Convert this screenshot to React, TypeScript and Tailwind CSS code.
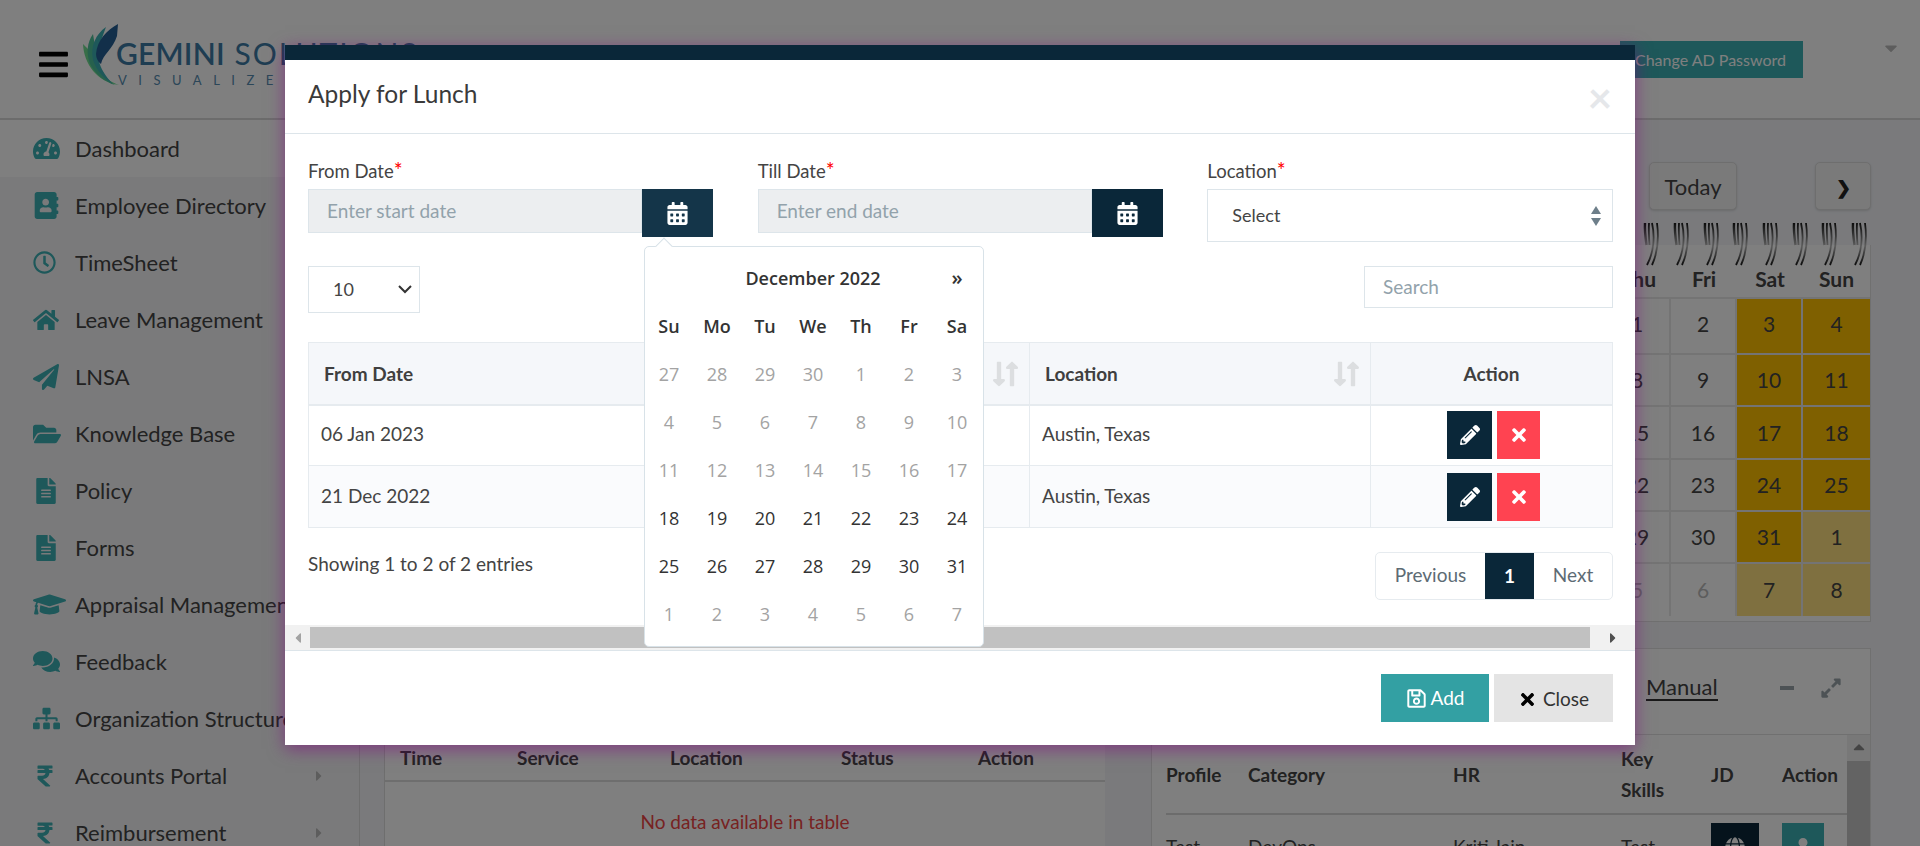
import React from 'react'
import {
    FaAddressBook,
    FaBars,
    FaCalendarAlt,
    FaCaretDown,
    FaCaretLeft,
    FaCaretRight,
    FaComments,
    FaExpandAlt,
    FaFileAlt,
    FaFolderOpen,
    FaGlobe,
    FaGraduationCap,
    FaHome,
    FaLongArrowAltDown,
    FaLongArrowAltUp,
    FaPaperPlane,
    FaPencilAlt,
    FaRegClock,
    FaRegSave,
    FaRupeeSign,
    FaSitemap,
    FaTachometerAlt,
    FaTimes,
    FaUser,
} from 'react-icons/fa'

const sideItems = [
    { label: 'Dashboard', icon: <FaTachometerAlt size={27} /> },
    { label: 'Employee Directory', icon: <FaAddressBook size={27} /> },
    { label: 'TimeSheet', icon: <FaRegClock size={23} /> },
    { label: 'Leave Management', icon: <FaHome size={26} /> },
    { label: 'LNSA', icon: <FaPaperPlane size={26} /> },
    { label: 'Knowledge Base', icon: <FaFolderOpen size={28} /> },
    { label: 'Policy', icon: <FaFileAlt size={26} /> },
    { label: 'Forms', icon: <FaFileAlt size={26} /> },
    { label: 'Appraisal Management', icon: <FaGraduationCap size={33} /> },
    { label: 'Feedback', icon: <FaComments size={27} /> },
    { label: 'Organization Structure', icon: <FaSitemap size={27} /> },
    { label: 'Accounts Portal', icon: <FaRupeeSign size={24} />, more: true },
    { label: 'Reimbursement', icon: <FaRupeeSign size={24} />, more: true },
]

const calRows = [
    { h: 'h-[56px]', pb: 'pb-[5px]', days: ['1', '2', '3', '4'] },
    { h: 'h-[52px]', pb: '', days: ['8', '9', '10', '11'] },
    { h: 'h-[53px]', pb: '', days: ['15', '16', '17', '18'] },
    { h: 'h-[52px]', pb: '', days: ['22', '23', '24', '25'] },
    { h: 'h-[52px]', pb: '', days: ['29', '30', '31', '1'] },
    { h: 'h-[54px]', pb: '', days: ['5', '6', '7', '8'] },
]

const pickerWeeks = [
    ['27', '28', '29', '30', '1', '2', '3'],
    ['4', '5', '6', '7', '8', '9', '10'],
    ['11', '12', '13', '14', '15', '16', '17'],
    ['18', '19', '20', '21', '22', '23', '24'],
    ['25', '26', '27', '28', '29', '30', '31'],
    ['1', '2', '3', '4', '5', '6', '7'],
]

const Spiral = () => (
    <svg width="16" height="44" viewBox="0 0 16 44" fill="none" stroke="url(#ring)" strokeWidth="1.8">
        <defs>
            <linearGradient id="ring" gradientUnits="userSpaceOnUse" x1="0" y1="0" x2="0" y2="44">
                <stop offset="0" stopColor="#111" />
                <stop offset="0.55" stopColor="#bbb" />
                <stop offset="1" stopColor="#111" />
            </linearGradient>
        </defs>
        <path d="M2 1 C1.5 8 2.5 16 3.5 23" strokeWidth="2.4" />
        <path d="M6 1 C5.5 8 6 16 6.5 23" />
        <path d="M9 1 C12 14 11 30 4 43" />
        <path d="M14 1 C16 16 15 30 9 43" />
    </svg>
)

const SortIcon = () => (
    <span className="flex text-[#dcdee0]">
        <FaLongArrowAltDown size={28} className="-mr-[15px]" />
        <FaLongArrowAltUp size={28} />
    </span>
)

const DateField = (props: { label: string; placeholder: string; active?: boolean }) => {
    return (
        <div className="flex flex-col">
            <label className="mb-[8px] h-[22px] text-[18.5px] leading-[22px] text-[#444]">
                {props.label}
                <span className="text-[21px] leading-none text-[#ff0000]">*</span>
            </label>
            <div className="flex items-start">
                <div className="flex h-[44px] w-[334px] items-center border border-[#dde5ea] bg-[#eceef0] pl-[18px] text-[19px] text-[#92a2ab]">
                    {props.placeholder}
                </div>
                <button className={`flex h-[48px] w-[71px] items-center justify-center text-white ${props.active ? 'bg-[#143549]' : 'bg-[#0a2739]'}`}>
                    <FaCalendarAlt size={23} />
                </button>
            </div>
        </div>
    )
}

const ActionCell = () => (
    <td className="border-l border-[#e6ebef] p-0">
        <div className="flex justify-center gap-[5px] pl-[4px]">
            <button className="flex h-[48px] w-[45px] items-center justify-center bg-[#0a2739] text-white">
                <FaPencilAlt size={20} />
            </button>
            <button className="flex h-[48px] w-[43px] items-center justify-center bg-[#ff4351] text-white">
                <FaTimes size={20} />
            </button>
        </div>
    </td>
)

const DatePicker = () => (
    <div className="absolute left-[359px] top-[186px] z-10 h-[401px] w-[340px] rounded-[5px] border border-[#d8e2e8] bg-white font-['Open_Sans',sans-serif] text-[18px] text-[#333]">
        <div className="absolute -top-[7px] left-[13px] h-[12px] w-[12px] rotate-45 border-l border-t border-[#d8e2e8] bg-white"></div>
        <div className="relative grid grid-cols-7 pr-[2px] pt-[7px]">
            <div className="col-span-5 col-start-2 flex h-[48px] items-center justify-center whitespace-nowrap text-[18px] font-semibold">December 2022</div>
            <div className="flex h-[48px] items-center justify-center text-[20px] font-semibold">»</div>
            {['Su', 'Mo', 'Tu', 'We', 'Th', 'Fr', 'Sa'].map((d) => (
                <div key={d} className="flex h-[48px] items-center justify-center font-semibold">{d}</div>
            ))}
            {pickerWeeks.map((week, w) =>
                week.map((d, i) => (
                    <div key={`${w}-${i}`} className={`flex h-[48px] items-center justify-center ${w === 3 || w === 4 ? 'text-[#333]' : 'text-[#a3a3a3]'}`}>
                        {d}
                    </div>
                )),
            )}
        </div>
    </div>
)

const Modal = () => (
    <div className="relative flex h-[700px] w-[1350px] flex-col border-t-[15px] border-[#0a2739] bg-white text-[#444] shadow-[0_4px_16px_rgba(128,0,128,0.55)]">
        <div className="flex h-[74px] items-center justify-between border-b border-[#dde5ea] pl-[23px] pr-[23px]">
            <h4 className="pb-[5px] text-[24.5px] text-[#3a3a3a]">Apply for Lunch</h4>
            <span className="text-[42px] font-bold leading-none text-[#e5e7ea]">×</span>
        </div>

        <div className="flex-1 pl-[23px] pr-[22px] pt-[25px]">
            <div className="grid grid-cols-3 gap-x-[44px]">
                <DateField label="From Date" placeholder="Enter start date" active />
                <DateField label="Till Date" placeholder="Enter end date" />
                <div className="flex flex-col">
                    <label className="mb-[8px] h-[22px] text-[18.5px] leading-[22px] text-[#444]">
                        Location<span className="text-[21px] leading-none text-[#ff0000]">*</span>
                    </label>
                    <div className="flex h-[53px] items-center justify-between border border-[#dde5ea] pl-[24px] pr-[11px] text-[18px]">
                        Select
                        <svg width="10" height="20" viewBox="0 0 10 20" fill="#6e7f8a">
                            <path d="M5 0 L10 8 H0 Z M5 20 L0 12 H10 Z" />
                        </svg>
                    </div>
                </div>
            </div>

            <div className="mt-[24px] flex items-start justify-between">
                <div className="flex h-[47px] w-[112px] items-center justify-between border border-[#dde5ea] pl-[24px] pr-[7px] text-[18px]">
                    10
                    <svg width="14" height="9" viewBox="0 0 14 9" fill="none" stroke="#333" strokeWidth="2">
                        <path d="M1 1 L7 7 L13 1" />
                    </svg>
                </div>
                <div className="flex h-[42px] w-[249px] items-center border border-[#dde5ea] pl-[18px] text-[19px] text-[#92a2ab]">Search</div>
            </div>

            <table className="mt-[29px] w-full table-fixed border-collapse border border-[#e6ebef] text-[19px]">
                <thead>
                    <tr className="h-[62px] border-b-2 border-[#e6ebef] bg-[#f5f7fa] text-left font-bold">
                        <th className="w-[360px] pl-[15px] pt-[2px] font-bold text-[#3f3f3f]">From Date</th>
                        <th className="w-[361px] pl-[15px] pr-[3px] pt-[2px] font-bold text-[#3f3f3f]">
                            <div className="flex items-center justify-between">Till Date<SortIcon /></div>
                        </th>
                        <th className="w-[341px] border-l border-[#e6ebef] pl-[15px] pr-[3px] pt-[2px] font-bold text-[#3f3f3f]">
                            <div className="flex items-center justify-between">Location<SortIcon /></div>
                        </th>
                        <th className="border-l border-[#e6ebef] pt-[2px] text-center font-bold text-[#3f3f3f]">Action</th>
                    </tr>
                </thead>
                <tbody>
                    <tr className="h-[61px] border-b border-[#e6ebef]">
                        <td className="pb-[2px] pl-[12px]">06 Jan 2023</td>
                        <td className="pb-[2px] pl-[12px]">06 Jan 2023</td>
                        <td className="border-l border-[#e6ebef] pb-[2px] pl-[12px]">Austin, Texas</td>
                        <ActionCell />
                    </tr>
                    <tr className="h-[62px] bg-[#fafbfd]">
                        <td className="pl-[12px]">21 Dec 2022</td>
                        <td className="pl-[12px]">21 Dec 2022</td>
                        <td className="border-l border-[#e6ebef] pl-[12px]">Austin, Texas</td>
                        <ActionCell />
                    </tr>
                </tbody>
            </table>

            <div className="mt-[24px] flex items-start justify-between">
                <div className="text-[19px] leading-[24px]">Showing 1 to 2 of 2 entries</div>
                <div className="flex h-[48px] items-stretch rounded-[5px] border border-[#e6ebef] text-[19px] text-[#5d6b74]">
                    <span className="flex w-[109px] items-center justify-center pb-[1px]">Previous</span>
                    <span className="flex w-[49px] items-center justify-center bg-[#0a2739] font-bold text-white">1</span>
                    <span className="flex w-[78px] items-center justify-center pb-[1px]">Next</span>
                </div>
            </div>
        </div>

        <div className="flex h-[26px] items-center justify-between border-b border-[#dde5ea] bg-[#f1f1f1]">
            <span className="flex w-[25px] justify-center text-[#a3a3a3]"><FaCaretLeft size={16} /></span>
            <div className="h-[21px] flex-1 bg-[#c1c1c1]"></div>
            <span className="flex w-[45px] justify-center text-[#505050]"><FaCaretRight size={16} /></span>
        </div>

        <div className="flex h-[94px] items-start justify-end gap-[5px] pr-[22px] pt-[23px] text-[19px]">
            <button className="flex h-[48px] w-[108px] items-center justify-center gap-[4px] bg-[#33a0a3] text-white">
                <FaRegSave size={21} />
                Add
            </button>
            <button className="flex h-[48px] w-[119px] items-center justify-center gap-[6px] bg-[#e4e4e4] pt-[2px] text-[#333]">
                <FaTimes size={19} className="text-black" />
                Close
            </button>
        </div>

        <DatePicker />
    </div>
)

const Logo = () => (
    <div className="ml-[13px] flex items-center">
        <svg width="36" height="62" viewBox="0 0 36 62" className="-mt-[8px]">
            <path d="M0 20 C1 40 14 58 36 61 C22 56 9 44 6 26 Z" fill="#70dd90" />
            <path d="M10 10 C4 18 3 30 7 40 C12 50 22 58 32 61 C20 53 9 38 12 22 Z" fill="#4fc39a" />
            <path d="M23 3 C13 10 7 22 10 36 C13 46 22 56 30 60 C20 50 12 36 16 22 Z" fill="#3cb0b4" />
            <path d="M35 0 C24 6 14 16 13 30 C13 34 15 38 18 40 C20 30 30 25 34 12 Z" fill="#245f94" />
        </svg>
        <div className="-ml-[3px] mt-[8px] flex flex-col">
            <span className="whitespace-nowrap text-[30px] leading-[30px] text-[#3c7aa4]">
                <span className="font-semibold tracking-[0.2px]">GEMINI</span>
                <span className="tracking-[2px]"> SOLUTIONS</span>
            </span>
            <span className="ml-[2px] mt-[4px] whitespace-nowrap text-[13px] leading-[16px] tracking-[11.5px] text-[#568cb0]">VISUALIZE</span>
        </div>
    </div>
)

const EventCalendar = () => (
    <div className="relative ml-auto mt-[35px] w-[464px] border-b border-r border-[#e0e0e0] bg-white">
        <div className="absolute -top-[23px] right-[3px] flex gap-[13.7px]">
            {Array.from({ length: 15 }).map((_, i) => (
                <Spiral key={i} />
            ))}
        </div>
        <div className="grid h-[52px] grid-cols-[66px_66px_66px_66px_66px_66px_67px] text-[#444]">
            {['Mon', 'Tue', 'Wed', 'Thu', 'Fri', 'Sat', 'Sun'].map((d) => (
                <div key={d} className="flex items-center justify-center pt-[15px] text-[21px] font-bold leading-none">{d}</div>
            ))}
        </div>
        {calRows.map((row, r) => (
            <div key={r} className={`grid grid-cols-[66px_66px_66px_66px_66px_66px_67px] border-t-2 border-[#e8e8e8] text-[21px] ${row.h}`}>
                <div className="col-span-3"></div>
                <div className={`flex items-center justify-center border-r-2 border-[#e8e8e8] ${row.pb} ${r === 5 ? 'text-[#bbb]' : ''}`}>{row.days[0]}</div>
                <div className={`flex items-center justify-center border-r-2 border-[#e8e8e8] ${row.pb} ${r === 5 ? 'text-[#bbb]' : ''}`}>{row.days[1]}</div>
                <div className={`flex items-center justify-center border-r-2 border-[#e8e8e8] ${row.pb} ${r === 5 ? 'bg-[#ffe080]' : 'bg-[#ffc000]'}`}>{row.days[2]}</div>
                <div className={`flex items-center justify-center ${row.pb} ${r >= 4 ? 'bg-[#ffe080]' : 'bg-[#ffc000]'}`}>{row.days[3]}</div>
            </div>
        ))}
        <div className="h-[5px]"></div>
    </div>
)

const ManualPanel = () => (
    <div className="mt-[26px] border border-[#e0e0e0] bg-white">
        <div className="flex h-[86px] items-center border-b border-[#e0e0e0] pb-[8px] pl-[494px] text-[22px]">
            <span className="border-b-2 border-[#333] leading-[24px]">Manual</span>
            <span className="ml-[62px] h-[4px] w-[14px] bg-[#9aa5ab]"></span>
            <FaExpandAlt size={22} className="ml-[26px] text-[#9aa5ab]" />
        </div>
        <div className="flex">
            <div className="flex-1 pl-[14px] text-[19px] leading-[31px]">
                <div className="grid h-[80px] grid-cols-[82px_205px_168px_90px_71px_1fr] items-center border-b-2 border-[#d8d8d8] font-bold">
                    <span>Profile</span>
                    <span>Category</span>
                    <span>HR</span>
                    <span>Key<br />Skills</span>
                    <span>JD</span>
                    <span>Action</span>
                </div>
                <div className="grid h-[60px] grid-cols-[82px_205px_168px_90px_71px_1fr] pt-[16px]">
                    <span>Test</span>
                    <span>DevOps</span>
                    <span>Kriti Jain</span>
                    <span>Test</span>
                    <span className="-mt-[8px] flex h-[48px] w-[48px] items-center justify-center bg-[#0a2739] text-white"><FaGlobe size={20} /></span>
                    <span className="-mt-[8px] flex h-[48px] w-[42px] items-center justify-center bg-[#3cb0b4] text-white"><FaUser size={18} /></span>
                </div>
            </div>
            <div className="w-[23px] bg-[#f1f1f1]">
                <div className="flex h-[26px] items-center justify-center text-[#888]"><FaCaretDown size={18} className="rotate-180" /></div>
                <div className="h-[200px] bg-[#c6c6c6]"></div>
            </div>
        </div>
    </div>
)

const App = () => {
    return (
        <div className="relative h-[846px] w-[1920px] overflow-hidden bg-[#f4f5f9] font-['Lato',sans-serif] text-[#444]">
            <header className="relative flex h-[120px] items-center border-b-2 border-[#d8d8d8] bg-white pl-[37px]">
                <FaBars size={33} className="mt-[10px] text-black" />
                <Logo />
                <button className="absolute left-[1620px] top-[41px] h-[37px] w-[183px] bg-[#3cb0b4] pl-[15px] text-left text-[16px] text-white">Change AD Password</button>
                <FaCaretDown size={20} className="absolute left-[1881px] top-[38px] text-[#bbb]" />
            </header>

            <div className="flex">
                <aside className="w-[360px] shrink-0 border-r border-[#dcdcdc] bg-[#f5f5f7]">
                    {sideItems.map((item, i) => (
                        <div key={item.label} className={`flex h-[57px] items-center pl-[33px] pr-[32px] text-[22px] text-[#444] ${i === 0 ? 'bg-white' : ''}`}>
                            <span className="flex w-[42px] shrink-0 text-[#3cb0b4]">{item.icon}</span>
                            <span className="whitespace-nowrap">{item.label}</span>
                            {item.more && <FaCaretRight size={16} className="ml-auto text-[#bbb]" />}
                        </div>
                    ))}
                </aside>

                <main className="flex flex-1 gap-[46px] pl-[24px] pr-[49px]">
                    <div className="w-[721px] pt-[580px]">
                        <div className="border-l border-[#dcdcdc] bg-white pt-[35px] text-[19px]">
                            <div className="grid h-[47px] grid-cols-[117px_153px_171px_137px_1fr] items-center border-b-2 border-[#dcdcdc] pl-[15px] pt-[1px] font-bold">
                                <span>Time</span>
                                <span>Service</span>
                                <span>Location</span>
                                <span>Status</span>
                                <span>Action</span>
                            </div>
                            <div className="py-[26px] text-center text-[#ee4444]">No data available in table</div>
                        </div>
                    </div>

                    <div className="w-[720px] pt-[42px]">
                        <div className="flex h-[48px] justify-end gap-[78px] text-[22px]">
                            <button className="h-[48px] w-[88px] rounded-[5px] border border-[#ddd] bg-[#f5f5f5] shadow-sm">Today</button>
                            <button className="h-[48px] w-[56px] rounded-[5px] border border-[#ddd] bg-[#f5f5f5] pt-[2px] text-[18px] font-bold text-[#222] shadow-sm">❯</button>
                        </div>
                        <EventCalendar />
                        <ManualPanel />
                    </div>
                </main>
            </div>

            <div className="absolute inset-0 flex justify-center bg-black/50 pt-[45px]">
                <Modal />
            </div>
        </div>
    )
}

export default App
